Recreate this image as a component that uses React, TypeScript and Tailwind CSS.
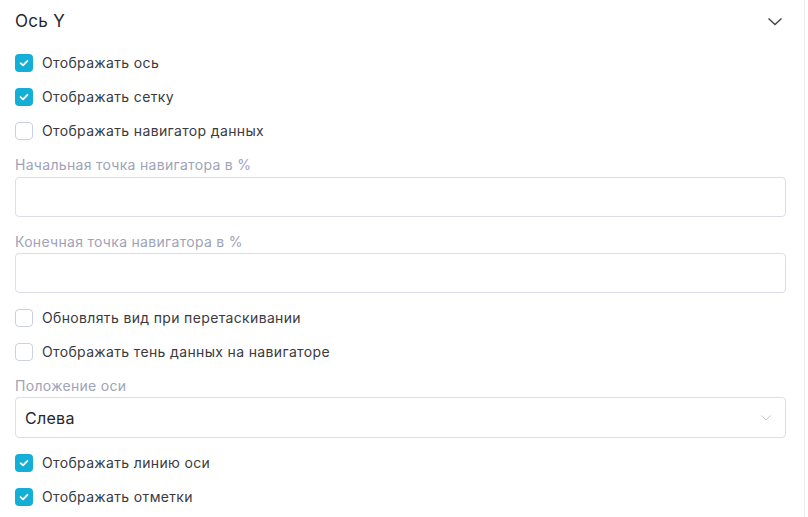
import React from "react";

const font = { fontFamily: "Inter, 'Noto Sans', sans-serif" };

function Check({ checked, label }: { checked: boolean; label: string }) {
  return (
    <div className="flex h-[34px] items-center">
      {checked ? (
        <div className="flex h-[18px] w-[18px] items-center justify-center rounded-[4px] bg-[#14afd6]">
          <svg width="12" height="12" viewBox="0 0 12 12" fill="none">
            <path d="M2.6 6.2 L5 8.4 L9.4 3.8" stroke="white" strokeWidth="1.8" strokeLinecap="round" strokeLinejoin="round" />
          </svg>
        </div>
      ) : (
        <div className="h-[18px] w-[18px] rounded-[4px] border border-[#cdd0e0] bg-white" />
      )}
      <span className="ml-[9px] text-[14px] font-normal leading-[18px] tracking-[0.35px] text-[#3a3a40]">{label}</span>
    </div>
  );
}

function Label({ children, className = "" }: { children: React.ReactNode; className?: string }) {
  return (
    <div className={"h-[20px] text-[14px] font-normal leading-[20px] tracking-[0.3px] text-[#9ea3b8] " + className}>
      {children}
    </div>
  );
}

export default function App() {
  return (
    <div className="h-[517px] w-[808px] bg-white" style={font}>
      <div className="h-full w-[805px] border-r border-[#ececef] pl-[15px] pr-[18px]">
        <div className="flex h-[40px] items-center justify-between pt-[3px]">
          <span className="text-[17px] font-normal tracking-[0.3px] text-[#26262b]">Ось Y</span>
          <svg className="mr-[3px]" width="16" height="10" viewBox="0 0 16 10" fill="none">
            <path d="M1.5 1.5 L8 7.5 L14.5 1.5" stroke="#444" strokeWidth="1.4" />
          </svg>
        </div>
        <div className="mt-[6px]">
          <Check checked label="Отображать ось" />
          <Check checked label="Отображать сетку" />
          <Check checked={false} label="Отображать навигатор данных" />
        </div>
        <Label className="mt-[7px]">Начальная точка навигатора в %</Label>
        <div className="mt-[2px] h-[40px] rounded-[4px] border border-[#dcdde8]" />
        <Label className="mt-[15px]">Конечная точка навигатора в %</Label>
        <div className="mt-[1px] h-[40px] rounded-[4px] border border-[#dcdde8]" />
        <div className="mt-[8px]">
          <Check checked={false} label="Обновлять вид при перетаскивании" />
          <Check checked={false} label="Отображать тень данных на навигаторе" />
        </div>
        <Label className="mt-[7px]">Положение оси</Label>
        <div className="mt-[1px] flex h-[41px] items-center justify-between rounded-[4px] border border-[#dcdde8] pl-[9px] pr-[14px]">
          <span className="text-[16px] font-normal tracking-[0.3px] text-[#26262b]">Слева</span>
          <svg width="10" height="6" viewBox="0 0 10 6" fill="none">
            <path d="M0.5 0.5 L5 5 L9.5 0.5" stroke="#c5c8d8" strokeWidth="1" />
          </svg>
        </div>
        <div className="mt-[8px]">
          <Check checked label="Отображать линию оси" />
          <Check checked label="Отображать отметки" />
        </div>
      </div>
    </div>
  );
}
